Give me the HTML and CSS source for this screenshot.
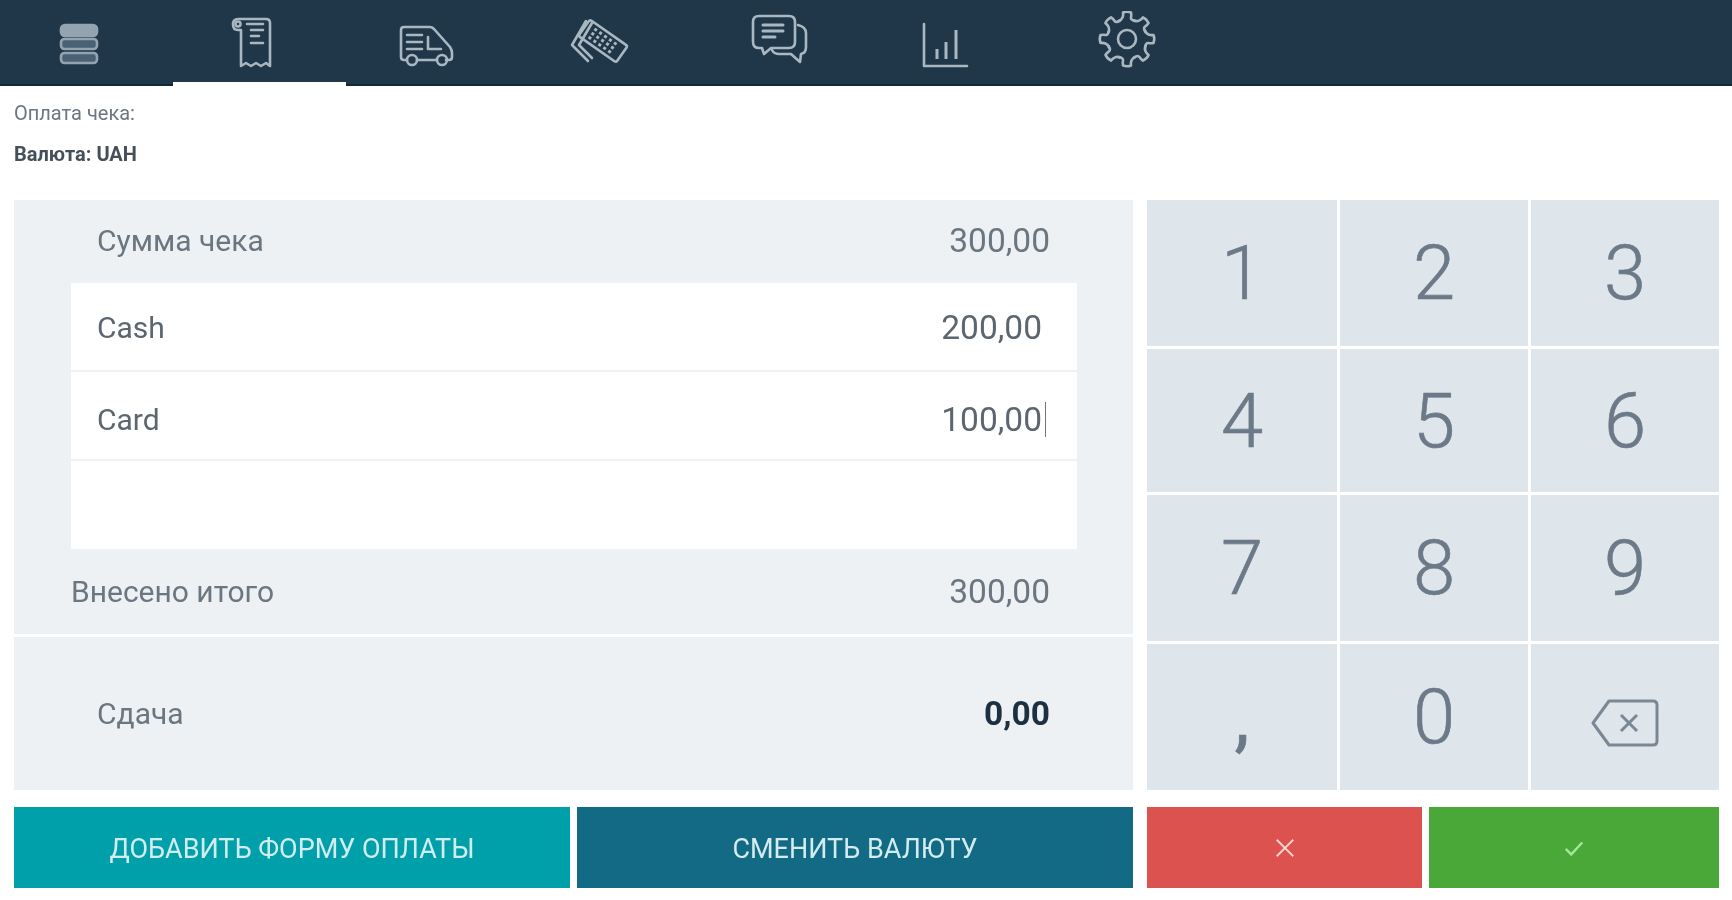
FILE: index.html
```html
<!DOCTYPE html>
<html lang="ru">
<head>
<meta charset="utf-8">
<title>Оплата чека</title>
<link rel="stylesheet" href="styles.css">
</head>
<body>
<nav class="topbar">
  <a class="tab"><svg class="ico ico-menu" viewBox="0 0 64 64"><rect class="fill" x="13" y="14" width="36" height="11" rx="4"/><rect class="soft" x="13" y="28" width="36" height="10" rx="3.5"/><rect class="soft" x="13" y="42" width="36" height="10" rx="3.5"/></svg></a>
  <a class="tab active"><svg class="ico" viewBox="0 0 64 64"><path d="M20 19v36l5-3 5 3 5-3 5 3 5-3 4 3V12q0-4-4-4H17q-5 0-5 5.500t5 5.500h3"/><circle cx="17" cy="13" r="2.500"/><path d="M26 13h16M30 19h12M30 25h8M30 32h12"/></svg></a>
  <a class="tab"><svg class="ico" viewBox="0 0 64 64"><path d="M13 49H10q-3 0-3-3V19q0-3 3-3h26q2 0 4 2l16 18q2 3 2 6v4q0 3-3 3h-3M23 49h20"/><circle cx="18" cy="49" r="5"/><circle cx="48" cy="49" r="5"/><path d="M13 24h15M13 31h15M13 38h15M34 26v12h13"/></svg></a>
  <a class="tab"><svg class="ico" viewBox="0 0 64 64"><g transform="rotate(35 36 30)"><rect x="13" y="20" width="46" height="20" rx="2"/><path class="dots" d="M22 25h28M22 30h28M22 35h28"/></g><path d="M19 10 5 34l16 16M25 12 12 34l13 13"/></svg></a>
  <a class="tab wide"><svg class="ico" viewBox="0 0 64 64"><g transform="translate(2 0)"><path d="M10 5h30q6 0 6 6v20q0 6-6 6H22l-7 6-2-6h-3q-6 0-6-6V11q0-6 6-6z"/><path class="bold" d="M14 14h20M14 20h20M14 26h12"/><path d="M49 14q8 2 8 8v14q0 6-5 7l-1 8-9-8H30q-5 0-7-4"/></g></svg></a>
  <a class="tab"><svg class="ico" viewBox="0 0 64 64"><path d="M11 13v42h43"/><path class="bar" d="M24 38v10M33 31v17M43 19v29"/></svg></a>
  <a class="tab wide"><svg class="ico" viewBox="0 0 64 64"><defs><path id="tooth" d="M-8.500-18q3-1 4-3.500t.500-5q3.500-1.500 8 0 .5 2.500 0 5t4 3.500"/></defs><g transform="translate(34 28)"><use href="#tooth"/><use href="#tooth" transform="rotate(45)"/><use href="#tooth" transform="rotate(90)"/><use href="#tooth" transform="rotate(135)"/><use href="#tooth" transform="rotate(180)"/><use href="#tooth" transform="rotate(225)"/><use href="#tooth" transform="rotate(270)"/><use href="#tooth" transform="rotate(315)"/><circle r="9"/></g></svg></a>
</nav>

<header class="info">
  <p class="info-title">Оплата чека:</p>
  <p class="info-currency">Валюта: UAH</p>
</header>

<main class="layout">
  <section class="panel">
    <div class="row row-sum"><span>Сумма чека</span><span class="num">300,00</span></div>
    <div class="entries">
      <div class="entry entry-cash"><span>Cash</span><span class="num">200,00</span></div>
      <div class="entry entry-card"><span>Card</span><span class="num value-active">100,00<i class="caret"></i></span></div>
      <div class="entry"></div>
    </div>
    <div class="row row-total"><span>Внесено итого</span><span class="num">300,00</span></div>
    <div class="row row-change"><span>Сдача</span><strong class="num">0,00</strong></div>
  </section>

  <section class="keypad">
    <button class="key">1</button><button class="key">2</button><button class="key">3</button>
    <button class="key">4</button><button class="key">5</button><button class="key">6</button>
    <button class="key">7</button><button class="key">8</button><button class="key">9</button>
    <button class="key key-comma">,</button><button class="key">0</button>
    <button class="key" aria-label="Удалить"><svg class="backspace" viewBox="0 0 68 48"><path d="M18 2h44q4 0 4 4v36q0 4-4 4H18L2 24z"/><path d="M30 16l16 16M46 16 30 32"/></svg></button>
  </section>

  <div class="actions">
    <button class="btn btn-add">ДОБАВИТЬ ФОРМУ ОПЛАТЫ</button>
    <button class="btn btn-currency">СМЕНИТЬ ВАЛЮТУ</button>
  </div>
  <div class="actions confirm">
    <button class="btn btn-cancel"><svg class="mark" viewBox="0 0 24 24"><path d="M3 3l18 18M21 3 3 21"/></svg></button>
    <button class="btn btn-ok"><svg class="mark check" viewBox="0 0 24 24"><path d="M3 13l6 6L21 6"/></svg></button>
  </div>
</main>
</body>
</html>
```
FILE: styles.css
```css
* { box-sizing: border-box; }
html, body { margin: 0; height: 100%; }
body {
  width: 1732px;
  height: 900px;
  overflow: hidden;
  background: #fff;
  color: #6b7681;
  font-family: Roboto, "Noto Sans", sans-serif;
  filter: blur(0.6px);
}

/* top navigation */
.topbar {
  display: flex;
  height: 86px;
  background: #20374a;
  border-bottom: 2px solid #10293b;
}
.tab {
  position: relative;
  width: 173px;
  height: 86px;
  padding: 11px 13px 0 0;
  display: flex;
  justify-content: center;
}
.tab.wide { padding-right: 0; }
.tab.active::after {
  content: "";
  position: absolute;
  left: 0;
  right: 0;
  top: 82px;
  height: 4px;
  background: #fff;
}
.ico {
  width: 64px;
  height: 64px;
  fill: none;
  stroke: #a9b7c1;
  stroke-width: 2.6;
  stroke-linejoin: round;
  stroke-linecap: round;
}
.ico-menu { stroke: #93a3af; }
.ico .fill { fill: #93a3af; }
.ico .soft { fill: #4a6174; }
.ico .bold { stroke-width: 3; }
.ico .dots { stroke-width: 3; stroke-dasharray: 3 3; stroke-linecap: butt; }
.ico .bar { stroke-width: 3; stroke-linecap: butt; }

/* heading */
.info {
  height: 114px;
  padding: 17px 14px 0;
  font-size: 20px;
  line-height: 20px;
}
.info p { margin: 0; }
.info-currency {
  margin-top: 21px !important;
  font-weight: 700;
  color: #454f59;
}

/* page grid */
.layout {
  display: grid;
  grid-template-columns: 1119px 572px;
  grid-template-rows: 590px 81px;
  column-gap: 14px;
  row-gap: 17px;
  padding-left: 14px;
}

/* left panel */
.panel {
  display: flex;
  flex-direction: column;
  background: #eef1f4;
  font-size: 30px;
}
.num { font-size: 33.5px; }
.row {
  display: flex;
  justify-content: space-between;
  align-items: center;
  padding: 0 83px;
}
.row-sum { height: 83px; padding-bottom: 2px; }
.row-total {
  height: 88px;
  padding-left: 57px;
  border-bottom: 3px solid #fff;
}
.row-change { flex: 1; }
.row-change strong { color: #1d3042; font-weight: 700; }
.entries {
  margin: 0 56px 0 57px;
  background: #fff;
}
.entry {
  display: flex;
  justify-content: space-between;
  align-items: center;
  height: 89px;
  padding: 0 35px 0 26px;
  border-bottom: 2px solid #f0f2f5;
  color: #5d666f;
}
.entry-cash { padding-top: 2px; }
.entry-card { padding-top: 8px; }
.entry:last-child { height: 88px; border-bottom: 0; }
.value-active { position: relative; }
.caret {
  position: absolute;
  right: -4px;
  top: 2px;
  bottom: 2px;
  width: 1px;
  background: #6b7681;
}

/* keypad */
.keypad {
  display: grid;
  grid-template-columns: 190px 188px 188px;
  grid-template-rows: 146px 143px 146px 146px;
  gap: 3px;
}
.key {
  border: 0;
  padding: 0;
  background: #dfe6eb;
  color: #6b7988;
  font: 300 76px/1 Roboto, sans-serif;
  -webkit-text-stroke: 0.6px #6b7988;
}
.key-comma { font-weight: 400; }
.backspace {
  display: block;
  width: 68px;
  height: 48px;
  margin: 12px auto 0;
  fill: none;
  stroke: #7a8794;
  stroke-width: 3;
  stroke-linejoin: round;
}

/* action buttons */
.actions {
  display: grid;
  grid-template-columns: 1fr 1fr;
  gap: 7px;
}
.confirm { grid-template-columns: 275px 290px; }
.btn {
  border: 0;
  padding: 4px 0 0;
  color: #d2ecef;
  font: 400 27px/1 Roboto, sans-serif;
}
.btn-add { background: #00a0ab; }
.btn-currency { background: #126a85; }
.btn-cancel { background: #dc524e; padding: 0; }
.btn-ok { background: #4aa838; padding: 0; }
.mark {
  display: block;
  width: 22px;
  height: 22px;
  margin: 0 auto;
  fill: none;
  stroke: #f6d5d0;
  stroke-width: 2;
}
.mark.check { stroke: #a5e59a; stroke-width: 2.6; }
```
